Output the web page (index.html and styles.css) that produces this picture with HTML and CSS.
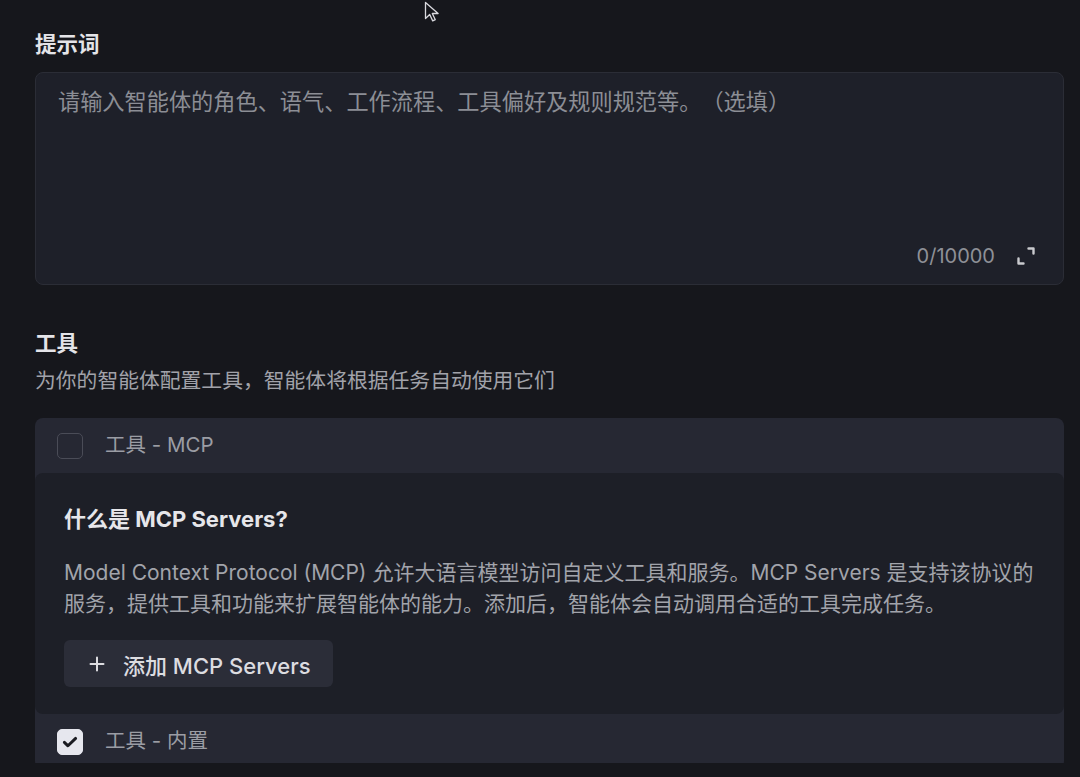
FILE: index.html
```html
<!DOCTYPE html>
<html lang="zh-CN">
<head>
    <meta charset="UTF-8">
    <meta name="viewport" content="width=device-width, initial-scale=1.0">
    <title>智能体配置</title>
    <link rel="stylesheet" href="styles.css">
</head>
<body>
    <!-- mouse pointer captured in the screenshot -->
    <svg class="pointer" width="16" height="22" viewBox="0 0 16 22">
        <path d="M1.5 1.5v16l4.2-4 3 6.4 2.6-1.2-3-6.2h5.8z" fill="#15161b" stroke="#d9d9de" stroke-width="1.3" stroke-linejoin="round"/>
    </svg>

    <main class="page">
        <!-- Prompt -->
        <section class="field">
            <h2 class="field-title">提示词</h2>
            <div class="prompt-box">
                <textarea class="prompt-input" placeholder="请输入智能体的角色、语气、工作流程、工具偏好及规则规范等。（选填）"></textarea>
                <div class="prompt-footer">
                    <span class="prompt-count">0/10000</span>
                    <svg class="expand-icon" width="24" height="24" viewBox="0 0 24 24" fill="none" stroke="currentColor" stroke-width="2.4" stroke-linecap="round" stroke-linejoin="round">
                        <path d="M14.5 4.5h5v5"/>
                        <path d="M9.5 19.5h-5v-5"/>
                    </svg>
                </div>
            </div>
        </section>

        <!-- Tools -->
        <section class="field tools">
            <h2 class="field-title">工具</h2>
            <p class="field-desc">为你的智能体配置工具，智能体将根据任务自动使用它们</p>

            <div class="tool-group">
                <div class="tool-row">
                    <span class="checkbox"></span>
                    <span class="tool-label">工具 - MCP</span>
                </div>

                <div class="mcp-panel">
                    <h3 class="mcp-title">什么是 MCP Servers?</h3>
                    <p class="mcp-text">Model Context Protocol (MCP) 允许大语言模型访问自定义工具和服务。MCP Servers 是支持该协议的服务，提供工具和功能来扩展智能体的能力。添加后，智能体会自动调用合适的工具完成任务。</p>
                    <button class="add-btn" type="button">
                        <svg width="16" height="16" viewBox="0 0 16 16" fill="none" stroke="currentColor" stroke-width="2" stroke-linecap="round">
                            <path d="M8 1.5v13M1.5 8h13"/>
                        </svg>
                        添加 MCP Servers
                    </button>
                </div>

                <div class="tool-row">
                    <span class="checkbox checked">
                        <svg width="18" height="18" viewBox="0 0 16 16" fill="none" stroke="#1b1c22" stroke-width="2.6" stroke-linecap="round" stroke-linejoin="round">
                            <path d="M3 8.3l3.2 3.1L13 4.8"/>
                        </svg>
                    </span>
                    <span class="tool-label">工具 - 内置</span>
                </div>
            </div>
        </section>
    </main>
</body>
</html>
```

FILE: styles.css
```css
body {
    margin: 0;
    background-color: #16171c;
    font-family: "Inter", "Noto Sans CJK SC", sans-serif;
    color: #e4e4e8;
    text-spacing-trim: space-all;
}
.pointer {
    position: absolute;
    left: 424px;
    top: 1px;
}
.page {
    height: 763px;
    overflow: hidden;
    padding: 29px 16px 0 35px;
    box-sizing: border-box;
}
.field-title {
    margin: 0;
    font-size: 21.5px;
    line-height: 30px;
    font-weight: 700;
    color: #e4e4e8;
}

/* prompt */
.prompt-box {
    margin-top: 13px;
    height: 213px;
    box-sizing: border-box;
    display: flex;
    flex-direction: column;
    background-color: #1e2029;
    border: 1px solid #2b2d36;
    border-radius: 8px;
}
.prompt-input {
    flex: 1;
    padding: 13px 22px 0;
    background: transparent;
    border: none;
    outline: none;
    resize: none;
    font-family: inherit;
    font-size: 22.2px;
    line-height: 32px;
    color: #e4e4e8;
    text-spacing-trim: space-all;
}
.prompt-input::placeholder {
    color: #8c8e95;
}
.prompt-footer {
    display: flex;
    justify-content: flex-end;
    align-items: center;
    gap: 19px;
    height: 24px;
    padding-right: 25px;
    margin-bottom: 16px;
}
.prompt-count {
    font-size: 20px;
    color: #8e9097;
}
.expand-icon {
    color: #c9cace;
}

/* tools */
.tools {
    margin-top: 43px;
}
.field-desc {
    margin: 9px 0 0;
    font-size: 20.8px;
    line-height: 28px;
    color: #a1a2a9;
}
.tool-group {
    margin-top: 23px;
    background-color: #262833;
    border-radius: 8px;
}
.tool-row {
    display: flex;
    align-items: center;
    gap: 22px;
    height: 55px;
    padding-left: 22px;
}
.checkbox {
    width: 26px;
    height: 26px;
    box-sizing: border-box;
    border: 1.5px solid #4a4c57;
    border-radius: 5px;
    display: flex;
    align-items: center;
    justify-content: center;
}
.checkbox.checked {
    background-color: #e6e7ee;
    border-color: #e6e7ee;
}
.tool-label {
    font-size: 20.5px;
    line-height: 26px;
    padding-bottom: 2px;
    color: #9b9da4;
}
.mcp-panel {
    padding: 31px 24px 27px 29px;
    background-color: #1d1f27;
    border-radius: 8px;
}
.mcp-title {
    margin: 0;
    font-size: 22px;
    line-height: 30px;
    font-weight: 700;
    color: #e6e6ea;
}
.mcp-text {
    margin: 23px 0 0;
    font-size: 21px;
    line-height: 31px;
    color: #a2a4ab;
}
.add-btn {
    margin-top: 21px;
    height: 47px;
    display: flex;
    align-items: center;
    gap: 18px;
    padding: 0 22px 0 25px;
    background-color: #2b2d38;
    border: none;
    border-radius: 6px;
    font-family: inherit;
    font-size: 22px;
    font-weight: 500;
    color: #dcdce0;
    cursor: pointer;
}
```
